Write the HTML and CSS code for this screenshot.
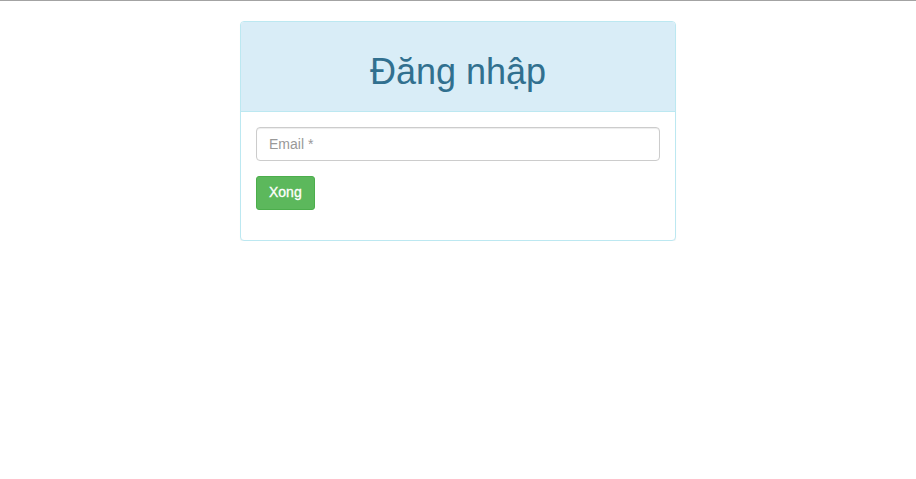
FILE: index.html
```html
<!DOCTYPE html>
<html lang="vi">
<head>
<meta charset="utf-8">
<title>Đăng nhập</title>
<link rel="stylesheet" href="styles.css">
</head>
<body>
<div class="topline"></div>
<main class="page">
  <section class="panel">
    <div class="panel-heading">
      <h1 class="panel-title">Đăng nhập</h1>
    </div>
    <form class="panel-body">
      <div class="form-group">
        <input class="form-control" type="email" placeholder="Email *">
      </div>
      <button class="btn" type="button">Xong</button>
    </form>
  </section>
</main>
</body>
</html>
```
FILE: styles.css
```css
* { box-sizing: border-box; }
html, body { margin: 0; padding: 0; background: #fff; }
body {
  font-family: "Liberation Sans", Arial, sans-serif;
  font-size: 14px;
  line-height: 1.42857;
  color: #333;
}
.topline { height: 1px; background: #a3a3a3; }
.page {
  display: flex;
  justify-content: center;
  padding-top: 20px;
}
.panel {
  width: 436px;
  border: 1px solid #bce8f1;
  border-radius: 4px;
  background: #fff;
  box-shadow: 0 1px 1px rgba(0,0,0,0.05);
}
.panel-heading {
  background: #d9edf7;
  color: #31708f;
  border-bottom: 1px solid #bce8f1;
  border-radius: 3px 3px 0 0;
  padding: 10px 15px;
  text-align: center;
}
.panel-title {
  margin: 20px 0 10px;
  font-size: 36px;
  font-weight: 500;
  line-height: 39px;
}
.panel-body { padding: 15px; margin: 0; }
.form-group { margin-bottom: 15px; }
.form-control {
  display: block;
  width: 100%;
  height: 34px;
  padding: 6px 12px;
  font-family: inherit;
  font-size: 14px;
  color: #555;
  border: 1px solid #ccc;
  border-radius: 4px;
  box-shadow: inset 0 1px 1px rgba(0,0,0,0.075);
  outline: none;
}
.form-control::placeholder { color: #999; }
.btn {
  display: inline-block;
  height: 34px;
  padding: 6px 12px;
  margin-bottom: 15px;
  font-family: inherit;
  font-size: 14px;
  line-height: 1.42857;
  color: #fff;
  background: #5cb85c;
  border: 1px solid #4cae4c;
  border-radius: 3px;
  cursor: pointer;
  -webkit-text-stroke: 0.3px #fff;
}
```
